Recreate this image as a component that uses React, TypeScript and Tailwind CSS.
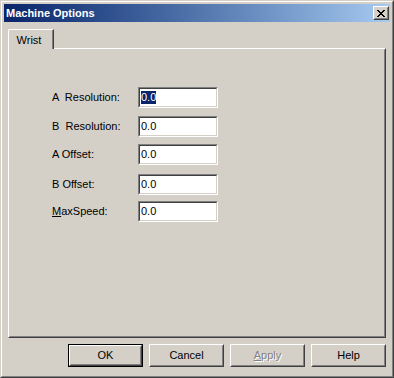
import React from "react";

const face = "bg-[#d4d0c8]";

function Raised({
  className = "",
  children,
}: {
  className?: string;
  children?: React.ReactNode;
}) {
  return (
    <div
      className={`border border-t-white border-l-white border-r-[#404040] border-b-[#404040] ${className}`}
    >
      <div className="flex h-full w-full items-center justify-center border border-t-[#d4d0c8] border-l-[#d4d0c8] border-r-[#808080] border-b-[#808080]">
        {children}
      </div>
    </div>
  );
}

function Field({ selected }: { selected?: boolean }) {
  return (
    <div className="h-[21px] w-[80px] border border-t-[#808080] border-l-[#808080] border-r-white border-b-white">
      <div className="flex h-full w-full items-center border border-t-[#404040] border-l-[#404040] border-r-[#d4d0c8] border-b-[#d4d0c8] bg-white pl-[1px]">
        {selected ? (
          <span className="bg-[#0a246a] leading-[13px] text-white">0.0</span>
        ) : (
          <span className="leading-[13px] text-black">0.0</span>
        )}
      </div>
    </div>
  );
}

const rows = [
  { label: "A  Resolution:", mt: "mt-[37px]", selected: true },
  { label: "B  Resolution:", mt: "mt-[8px]" },
  { label: "A Offset:", mt: "mt-[7px]" },
  { label: "B Offset:", mt: "mt-[9px]" },
  { label: "MaxSpeed:", mt: "mt-[6px]", underline: true },
];

function Btn({
  children,
  isDefault,
}: {
  children: React.ReactNode;
  isDefault?: boolean;
}) {
  if (isDefault) {
    return (
      <div className="h-[23px] w-[75px] border border-black">
        <Raised className="h-full w-full">{children}</Raised>
      </div>
    );
  }
  return <Raised className="h-[23px] w-[75px]">{children}</Raised>;
}

export default function App() {
  return (
    <div
      className={`h-[378px] w-[394px] ${face} border border-t-[#d4d0c8] border-l-[#d4d0c8] border-r-[#404040] border-b-[#404040] font-['Liberation_Sans',Arial,sans-serif] text-[11px] text-black`}
    >
      <div className="flex h-full w-full flex-col border border-t-white border-l-white border-r-[#808080] border-b-[#808080] p-[2px]">
        {/* title bar */}
        <div className="flex h-[18px] items-center justify-between bg-linear-to-r from-[#0a246a] to-[#a6caf0] pl-[2px] pr-[1px]">
          <span className="text-[11px] font-bold leading-none text-white">
            Machine Options
          </span>
          <Raised className={`h-[14px] w-[16px] ${face}`}>
            <svg width="8" height="7" viewBox="0 0 8 7" shapeRendering="crispEdges">
              <path
                d="M0 0h2v1h-2zM6 0h2v1h-2zM1 1h2v1h-2zM5 1h2v1h-2zM2 2h4v1h-4zM3 3h2v1h-2zM2 4h4v1h-4zM1 5h2v1h-2zM5 5h2v1h-2zM0 6h2v1h-2zM6 6h2v1h-2z"
                fill="#000"
              />
            </svg>
          </Raised>
        </div>

        {/* tab strip */}
        <div className="ml-[4px] mt-[7px] flex h-[20px] items-stretch">
          <div className="relative z-10 flex w-[46px] items-center justify-center rounded-tl-[2px] border-l border-t border-l-white border-t-white border-r border-r-[#404040] bg-[#d4d0c8] pb-[0px]">
            <div className="flex h-full w-full items-center justify-center border-r border-r-[#808080] pr-[3px] pt-[1px]">
              Wrist
            </div>
          </div>
        </div>

        {/* tab panel */}
        <div className="-mt-[1px] ml-[4px] mr-[4px] h-[290px] border border-t-white border-l-white border-r-[#404040] border-b-[#404040]">
          <div className="flex h-full w-full flex-col border border-t-[#d4d0c8] border-l-[#d4d0c8] border-r-[#808080] border-b-[#808080] pl-[42px]">
            {rows.map((r) => (
              <div key={r.label} className={`flex items-center ${r.mt}`}>
                <span className="w-[86px] whitespace-pre">
                  {r.underline ? (
                    <>
                      <span className="underline">M</span>axSpeed:
                    </>
                  ) : (
                    r.label
                  )}
                </span>
                <Field selected={r.selected} />
              </div>
            ))}
          </div>
        </div>

        {/* buttons */}
        <div className="mt-[6px] flex justify-end gap-[6px] pr-[4px]">
          <Btn isDefault>OK</Btn>
          <Btn>Cancel</Btn>
          <Btn>
            <span className="text-[#808080] [text-shadow:1px_1px_0_#fff]">
              <span className="underline">A</span>pply
            </span>
          </Btn>
          <Btn>Help</Btn>
        </div>
      </div>
    </div>
  );
}
